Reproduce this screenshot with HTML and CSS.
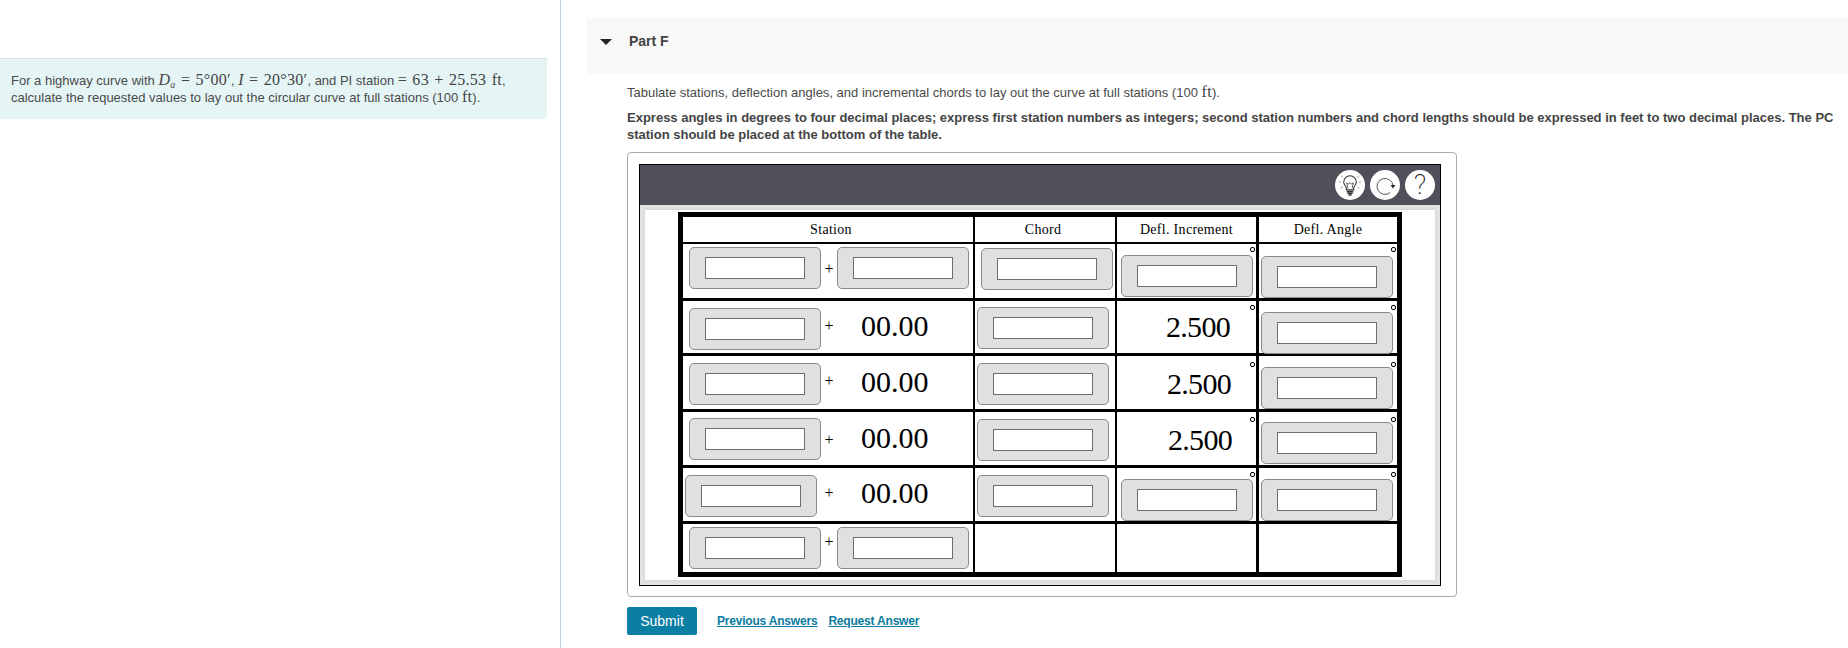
FILE: index.html
```html
<!DOCTYPE html>
<html lang="en">
<head>
<meta charset="utf-8">
<title>Part F</title>
<link rel="stylesheet" href="styles.css">
</head>
<body>
<div class="page">
  <aside class="left">
    <div class="intro">
      <p>For a highway curve with <span class="m"><i>D<sub>a</sub></i> = 5°00′</span>, <span class="m"><i>I</i> = 20°30′</span>, and PI station <span class="m">= 63 + 25.53 ft</span>,<br>calculate the requested values to lay out the circular curve at full stations (100 <span class="m">ft</span>).</p>
    </div>
  </aside>
  <main class="right">
    <div class="part-bar"><span class="caret"></span><span class="part-title">Part F</span></div>
    <div class="content">
      <p class="p1">Tabulate stations, deflection angles, and incremental chords to lay out the curve at full stations (100 <span class="m">ft</span>).</p>
      <p class="p2">Express angles in degrees to four decimal places; express first station numbers as integers; second station numbers and chord lengths should be expressed in feet to two decimal places. The PC station should be placed at the bottom of the table.</p>
      <div class="answer-box">
        <div class="tool">
          <div class="tool-bar">
            <span class="tool-btn">
              <svg width="26" height="26" viewBox="0 0 24 24" fill="none" stroke="#333" stroke-width="1">
                <path d="M8.6 16.5v-1.8c0-1.4-2.4-2.6-2.4-5.4a5.8 5.8 0 0 1 11.6 0c0 2.8-2.4 4-2.4 5.4v1.8z"/>
                <path d="M9 18h6M9.5 19.6h5M10.5 21.2h3" stroke-width="1.4"/>
                <path d="M10 15l-1-5 1.5 1 1.5-1 1.5 1 1.5-1-1 5" stroke-width=".7"/>
                <path d="M3.6 3.4l2.2 1.8M20.4 3.4l-2.2 1.8M1.6 9.3h2.2M20.2 9.3h2.2M3.4 15l2-1.3M20.6 15l-2-1.3" stroke="#888" stroke-width=".7"/>
              </svg>
            </span>
            <span class="tool-btn">
              <svg width="26" height="26" viewBox="0 0 26 26" fill="none" stroke="#444" stroke-width=".9">
                <path d="M18.1 20.6A8 8 0 1 1 21 14"/>
                <path d="M18.6 13h4.8L21 16.6z" fill="#222" stroke="none"/>
              </svg>
            </span>
            <span class="tool-btn help">?</span>
          </div>
          <div class="tool-body">
            <div class="canvas">
              <div class="table">
                <div class="row r0 b2">
                  <div class="cell head hs bw2">Station</div>
                  <div class="cell head hc bw2">Chord</div>
                  <div class="cell head bw3">Defl. Increment</div>
                  <div class="cell head">Defl. Angle</div>
                </div>

                <div class="row r1 b3">
                  <div class="cell station t3 bw2">
                    <span class="w-slot"><span class="widget"><input class="field" type="text"></span></span>
                    <span class="plus p25">+</span>
                    <span class="widget"><input class="field" type="text"></span>
                  </div>
                  <div class="cell t4 l6 bw2"><span class="widget"><input class="field" type="text"></span></div>
                  <div class="cell t11 l4 bw3"><span class="widget"><input class="field" type="text"></span><span class="mark m5"></span></div>
                  <div class="cell t12 l2"><span class="widget"><input class="field" type="text"></span><span class="mark m5"></span></div>
                </div>

                <div class="row r2 b3">
                  <div class="cell station t7 bw2">
                    <span class="w-slot"><span class="widget"><input class="field" type="text"></span></span>
                    <span class="plus p18">+</span>
                    <span class="val v1">00.00</span>
                  </div>
                  <div class="cell t6 l2 bw2"><span class="widget"><input class="field" type="text"></span></div>
                  <div class="cell bw3"><span class="num n1">2.500</span><span class="mark m6"></span></div>
                  <div class="cell t11 l2"><span class="widget"><input class="field" type="text"></span><span class="mark m6"></span></div>
                </div>

                <div class="row r3 b3">
                  <div class="cell station t7 bw2">
                    <span class="w-slot"><span class="widget"><input class="field" type="text"></span></span>
                    <span class="plus p18">+</span>
                    <span class="val v3">00.00</span>
                  </div>
                  <div class="cell t7 l2 bw2"><span class="widget"><input class="field" type="text"></span></div>
                  <div class="cell bw3"><span class="num n2">2.500</span><span class="mark m8"></span></div>
                  <div class="cell t11 l2"><span class="widget"><input class="field" type="text"></span><span class="mark m8"></span></div>
                </div>

                <div class="row r4 b3">
                  <div class="cell station t6 bw2">
                    <span class="w-slot"><span class="widget"><input class="field" type="text"></span></span>
                    <span class="plus p21">+</span>
                    <span class="val v2">00.00</span>
                  </div>
                  <div class="cell t7 l2 bw2"><span class="widget"><input class="field" type="text"></span></div>
                  <div class="cell bw3"><span class="num n3">2.500</span><span class="mark m7"></span></div>
                  <div class="cell t10 l2"><span class="widget"><input class="field" type="text"></span><span class="mark m7"></span></div>
                </div>

                <div class="row r5 b3">
                  <div class="cell station t7 bw2">
                    <span class="w-slot shifted"><span class="widget"><input class="field" type="text"></span></span>
                    <span class="plus p18">+</span>
                    <span class="val v1">00.00</span>
                  </div>
                  <div class="cell t7 l2 bw2"><span class="widget"><input class="field" type="text"></span></div>
                  <div class="cell t11 l4 bw3"><span class="widget"><input class="field" type="text"></span><span class="mark m6"></span></div>
                  <div class="cell t11 l2"><span class="widget"><input class="field" type="text"></span><span class="mark m6"></span></div>
                </div>

                <div class="row r6">
                  <div class="cell station t3 bw2">
                    <span class="w-slot"><span class="widget"><input class="field" type="text"></span></span>
                    <span class="plus p17">+</span>
                    <span class="widget"><input class="field" type="text"></span>
                  </div>
                  <div class="cell bw2"></div>
                  <div class="cell bw3"></div>
                  <div class="cell"></div>
                </div>
              </div>
            </div>
          </div>
        </div>
      </div>
      <div class="actions">
        <button class="submit" type="button">Submit</button>
        <a class="link" href="#">Previous Answers</a>
        <a class="link" href="#">Request Answer</a>
      </div>
    </div>
  </main>
</div>
</body>
</html>
```
FILE: styles.css
```css
* { box-sizing: border-box; }
html, body { margin: 0; padding: 0; background: #fff; }
body { font-family: "Liberation Sans", Arial, sans-serif; font-size: 13px; color: #4a4a4a; overflow: hidden; }
.page { display: flex; width: 1848px; height: 648px; }

.left { width: 561px; flex: none; border-right: 1px solid #bcd0e0; padding-top: 58px; }
.intro { width: 547px; height: 61px; background: #e5f5f6; border-top: 1px solid #d6dfe3; padding: 13px 11px 0; }
.intro p { margin: 0; line-height: 16px; }
.m { font-family: "Liberation Serif", serif; font-size: 16px; line-height: 1; color: #444; letter-spacing: .3px; word-spacing: 1px; }
.m sub { font-size: 10px; line-height: 0; vertical-align: -3px; }

.right { flex: 1; min-width: 0; padding: 18px 0 0 26px; }
.part-bar { height: 56px; background: #f8f8f8; display: flex; align-items: flex-start; padding: 16px 0 0 13px; }
.caret { width: 0; height: 0; margin-top: 5px; border-left: 6px solid transparent; border-right: 6px solid transparent; border-top: 6px solid #222; }
.part-title { margin-left: 17px; font-size: 14px; font-weight: 700; line-height: 14px; color: #444; }

.content { padding-left: 40px; padding-right: 14px; }
.p1 { margin: 10px 0 0; line-height: 16px; }
.p2 { margin: 8px 0 0; line-height: 17px; font-weight: 700; color: #444; }

.answer-box { width: 830px; height: 445px; margin-top: 9px; border: 1px solid #aaa; border-radius: 4px; padding: 11px; }
.tool { width: 802px; height: 422px; border: 1px solid #000; display: flex; flex-direction: column; }
.tool-bar { height: 40px; flex: none; background: #50505a; display: flex; justify-content: flex-end; align-items: flex-start; gap: 5px; padding: 5px 5px 0 0; }
.tool-btn { width: 30px; height: 30px; border-radius: 50%; background: #fff; display: flex; align-items: center; justify-content: center; }
.help { font-size: 28px; color: #111; font-family: Roboto, sans-serif; font-weight: 200; line-height: 30px; }
.tool-body { flex: 1; background: #e2e2e2; padding: 5px; }
.canvas { height: 370px; background: #fff; box-shadow: 0 0 3px #ccc; padding: 2px 0 0 33px; }

.table { width: 724px; height: 365px; border: 5px solid #000; font-family: "Liberation Serif", serif; color: #000; }
.row { display: grid; grid-template-columns: 292px 142px 142px 138px; }
.r0 { height: 27px; }
.r1 { height: 57px; }
.r2 { height: 55px; }
.r3 { height: 56px; }
.r4 { height: 56px; }
.r5 { height: 56px; }
.r6 { height: 48px; }
.b2 { border-bottom: 2px solid #000; }
.b3 { border-bottom: 3px solid #000; }

.cell { position: relative; min-width: 0; }
.bw2 { border-right: 2px solid #000; }
.bw3 { border-right: 3px solid #000; }
.head { font-size: 14px; letter-spacing: .3px; text-align: center; line-height: 25px; }
.hs { padding-left: 6px; }
.hc { padding-right: 4px; }

.station { display: grid; grid-template-columns: 138px 16px 1fr; align-items: start; }
.w-slot { display: flex; padding-left: 6px; }
.w-slot.shifted { padding-left: 2px; }

.widget { display: flex; align-items: center; justify-content: center; width: 132px; height: 42px; background: #e0e0e0; border: 1px solid #8a8a8a; border-radius: 5px; }
.field { display: block; width: 100px; height: 22px; margin: 0; padding: 0; background: #fff; border: 1px solid #6e6e6e; border-radius: 0; outline: 0; }

.plus { font-size: 16px; line-height: 14px; text-align: center; color: #000; }
.p25 { padding-top: 15px; }
.p18 { padding-top: 11px; }
.p21 { padding-top: 15px; }
.p17 { padding-top: 8px; }

.val { font-size: 30px; line-height: 34px; padding-left: 24px; white-space: nowrap; }
.v1 { margin-top: 1px; }
.v2 { margin-top: 3px; }
.v3 { margin-top: 2px; }

.num { display: block; font-size: 30px; line-height: 34px; letter-spacing: -.7px; white-space: nowrap; }
.n1 { padding: 9px 0 0 49px; }
.n2 { padding: 11px 0 0 50px; }
.n3 { padding: 11px 0 0 51px; }

.t3 { padding-top: 3px; }
.t4 { padding-top: 4px; }
.t6 { padding-top: 6px; }
.t7 { padding-top: 7px; }
.t10 { padding-top: 10px; }
.t11 { padding-top: 11px; }
.t12 { padding-top: 12px; }
.l2 { padding-left: 2px; }
.l4 { padding-left: 4px; }
.l6 { padding-left: 6px; }

.mark { position: absolute; right: 1px; width: 5px; height: 5px; border: 1px solid #000; border-radius: 2px; background: #fff; }
.m5 { top: 3px; }
.m6 { top: 4px; }
.m7 { top: 5px; }
.m8 { top: 6px; }

.actions { display: flex; align-items: center; margin-top: 10px; }
.submit { width: 70px; height: 28px; background: #0b7ea3; color: #fff; border: 0; border-radius: 2px; padding: 0; font-family: "Liberation Sans", Arial, sans-serif; font-size: 14px; }
.link { color: #0b7ba0; font-size: 12px; font-weight: 700; letter-spacing: -.2px; text-decoration: underline; margin-left: 11px; }
.submit + .link { margin-left: 20px; }
```
